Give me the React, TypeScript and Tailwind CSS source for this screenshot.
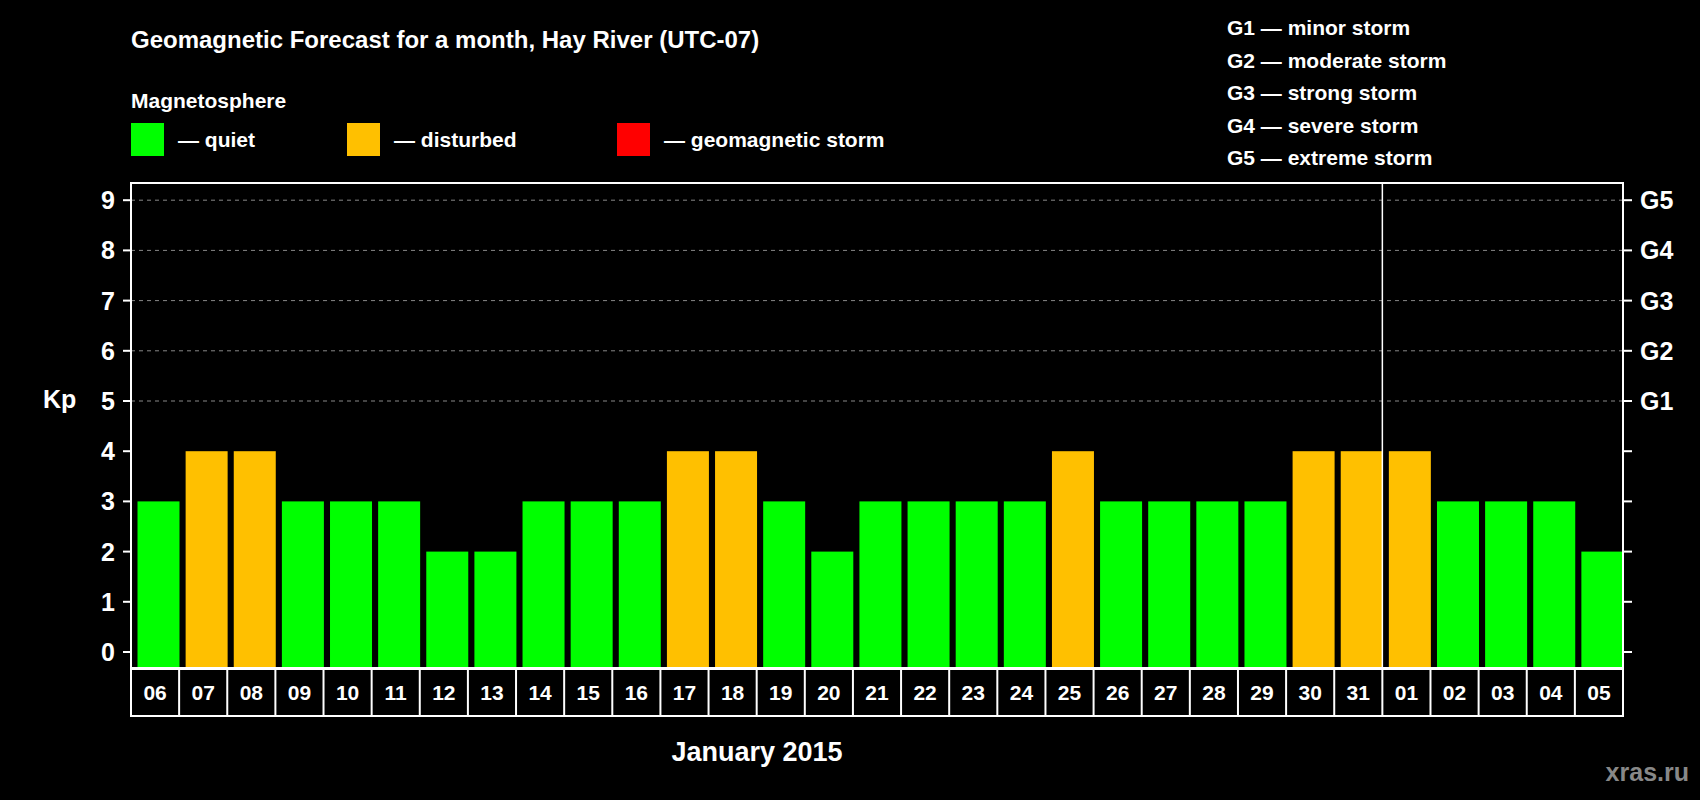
import React from "react";

const days = ["06","07","08","09","10","11","12","13","14","15","16","17","18","19","20","21","22","23","24","25","26","27","28","29","30","31","01","02","03","04","05"];
const vals = [3,4,4,3,3,3,2,2,3,3,3,4,4,3,2,3,3,3,3,4,3,3,3,3,4,4,4,3,3,3,2];

export default function App() {
  const L = 131, R = 1623, cw = (R - L) / 31;
  const y = (k: number) => 477 - 50.2 * k;
  const font = '"Liberation Sans", Arial, sans-serif';
  return (
    <div className="w-[1700px] h-[800px] bg-black text-white font-bold" style={{ fontFamily: font }}>
      <div className="flex h-[175px]">
        <div className="pl-[131px] pt-[26px] w-[1227px]">
          <div className="text-[24px] leading-[28px]">Geomagnetic Forecast for a month, Hay River (UTC-07)</div>
          <div className="text-[21px] leading-[24px] mt-[35px]">Magnetosphere</div>
          <div className="flex items-center mt-[10px] text-[21px]">
            <div className="w-[33px] h-[33px] bg-[#00ff00]" />
            <span className="ml-[14px] w-[169px]">— quiet</span>
            <div className="w-[33px] h-[33px] bg-[#ffc000]" />
            <span className="ml-[14px] w-[223px]">— disturbed</span>
            <div className="w-[33px] h-[33px] bg-[#ff0000]" />
            <span className="ml-[14px]">— geomagnetic storm</span>
          </div>
        </div>
        <div className="pt-[12px] text-[21px] leading-[32.5px]">
          <div>G1 — minor storm</div>
          <div>G2 — moderate storm</div>
          <div>G3 — strong storm</div>
          <div>G4 — severe storm</div>
          <div>G5 — extreme storm</div>
        </div>
      </div>
      <svg width="1700" height="625" style={{ fontFamily: font, fontWeight: 700 }}>
        {[5,6,7,8,9].map(k => (
          <line key={k} x1={L} x2={R} y1={y(k)} y2={y(k)} stroke="#888" strokeDasharray="4 4" strokeWidth="1" />
        ))}
        {vals.map((v, i) => (
          <rect key={i} x={L + i * cw + 6.5} y={y(v)} width={42} height={493 - y(v)} fill={v >= 4 ? "#ffc000" : "#00ff00"} />
        ))}
        <rect x={L} y={8} width={R - L} height={485} fill="none" stroke="#fff" strokeWidth="2" />
        <line x1={L + 26 * cw} x2={L + 26 * cw} y1={8} y2={493} stroke="#fff" strokeWidth="1.5" />
        {[0,1,2,3,4,5,6,7,8,9].map(k => (
          <g key={k}>
            <line x1={123} x2={L} y1={y(k)} y2={y(k)} stroke="#fff" strokeWidth="2" />
            <line x1={R} x2={R + 9} y1={y(k)} y2={y(k)} stroke="#fff" strokeWidth="2" />
            <text x={115} y={y(k) + 9} textAnchor="end" fontSize="25" fill="#fff">{k}</text>
          </g>
        ))}
        {[5,6,7,8,9].map(k => (
          <text key={k} x={1640} y={y(k) + 9} fontSize="25" fill="#fff">G{k - 4}</text>
        ))}
        <text x={43} y={233} fontSize="25" fill="#fff">Kp</text>
        <rect x={L} y={494} width={R - L} height={47} fill="none" stroke="#fff" strokeWidth="2" />
        {days.map((d, i) => (
          <g key={i}>
            {i > 0 && <line x1={L + i * cw} x2={L + i * cw} y1={494} y2={541} stroke="#fff" strokeWidth="2" />}
            <text x={L + i * cw + cw / 2} y={525} textAnchor="middle" fontSize="21" fill="#fff">{d}</text>
          </g>
        ))}
        <text x={757} y={586} textAnchor="middle" fontSize="27" fill="#fff">January 2015</text>
        <text x={1689} y={606} textAnchor="end" fontSize="25" fill="#888">xras.ru</text>
      </svg>
    </div>
  );
}
